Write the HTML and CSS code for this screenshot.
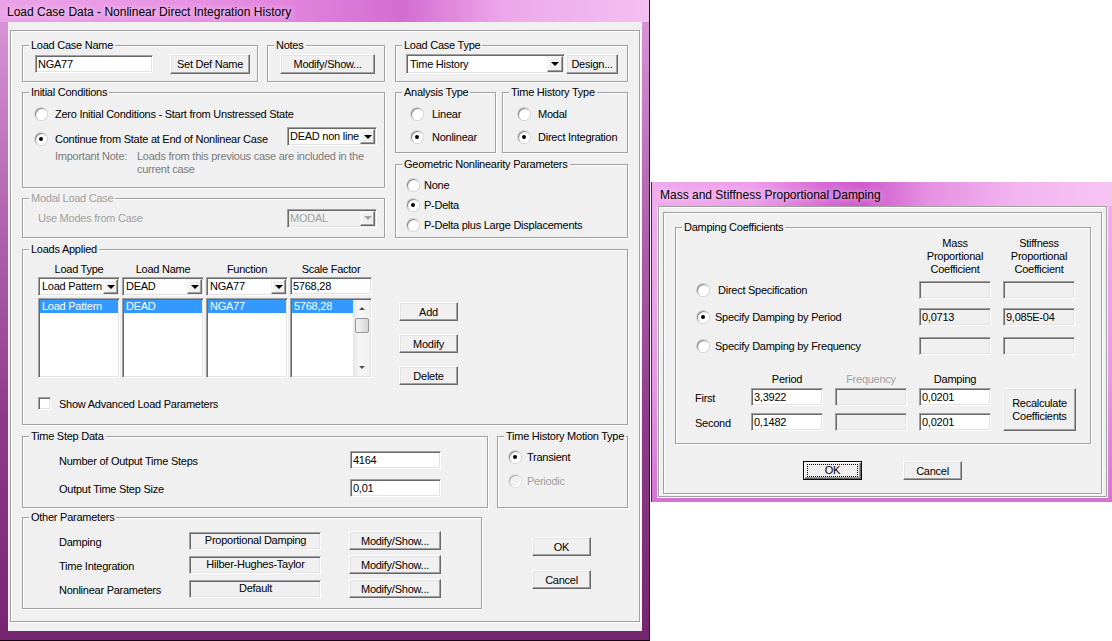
FILE: index.html
```html
<!DOCTYPE html>
<html lang="en">
<head>
    <meta charset="UTF-8">
    <title>Load Case Data - Nonlinear Direct Integration History</title>
    <link rel="stylesheet" href="styles.css">
</head>
<body>
<div class="window win-main">
    <div class="titlebar">Load Case Data - Nonlinear Direct Integration History</div>
    <div class="client">
        <div class="panel">
            <div class="row-a">
                <div class="group g-name">
                    <span class="legend">Load Case Name</span>
                    <div class="edit name-edit">NGA77</div>
                    <div class="btn btn-defname">Set Def Name</div>
                </div>
                <div class="group g-notes">
                    <span class="legend">Notes</span>
                    <div class="btn btn-notes">Modify/Show...</div>
                </div>
                <div class="group g-type">
                    <span class="legend">Load Case Type</span>
                    <div class="combo type-combo"><span class="val">Time History</span><span class="drop"></span></div>
                    <div class="btn btn-design">Design...</div>
                </div>
            </div>

            <div class="row-b">
                <div class="col-left">
                    <div class="group g-initial">
                        <span class="legend">Initial Conditions</span>
                        <div class="opt"><span class="radio"></span><span class="opt-text">Zero Initial Conditions - Start from Unstressed State</span></div>
                        <div class="opt-line">
                            <div class="opt"><span class="radio on"></span><span class="opt-text">Continue from State at End of Nonlinear Case</span></div>
                            <div class="combo case-combo"><span class="val">DEAD non line</span><span class="drop"></span></div>
                        </div>
                        <div class="note">
                            <span class="note-head">Important Note:</span>
                            <span>Loads from this previous case are included in the<br>current case</span>
                        </div>
                    </div>
                    <div class="group g-modal off">
                        <span class="legend">Modal Load Case</span>
                        <span>Use Modes from Case</span>
                        <div class="combo case-combo ro"><span class="val">MODAL</span><span class="drop"></span></div>
                    </div>
                </div>
                <div class="col-right">
                    <div class="type-row">
                        <div class="group g-analysis">
                            <span class="legend">Analysis Type</span>
                            <div class="opt"><span class="radio"></span><span class="opt-text">Linear</span></div>
                            <div class="opt"><span class="radio on"></span><span class="opt-text">Nonlinear</span></div>
                        </div>
                        <div class="group g-thtype">
                            <span class="legend">Time History Type</span>
                            <div class="opt"><span class="radio"></span><span class="opt-text">Modal</span></div>
                            <div class="opt"><span class="radio on"></span><span class="opt-text">Direct Integration</span></div>
                        </div>
                    </div>
                    <div class="group g-geom">
                        <span class="legend">Geometric Nonlinearity Parameters</span>
                        <div class="opt"><span class="radio"></span><span class="opt-text">None</span></div>
                        <div class="opt"><span class="radio on"></span><span class="opt-text">P-Delta</span></div>
                        <div class="opt"><span class="radio"></span><span class="opt-text">P-Delta plus Large Displacements</span></div>
                    </div>
                </div>
            </div>

            <div class="group g-loads">
                <span class="legend">Loads Applied</span>
                <div class="loads-body">
                    <div class="loads-grid">
                        <div class="lhead">Load Type</div>
                        <div class="lhead">Load Name</div>
                        <div class="lhead">Function</div>
                        <div class="lhead">Scale Factor</div>
                        <div class="combo"><span class="val">Load Pattern</span><span class="drop"></span></div>
                        <div class="combo"><span class="val">DEAD</span><span class="drop"></span></div>
                        <div class="combo"><span class="val">NGA77</span><span class="drop"></span></div>
                        <div class="edit">5768,28</div>
                        <div class="list"><div class="sel">Load Pattern</div></div>
                        <div class="list"><div class="sel">DEAD</div></div>
                        <div class="list"><div class="sel">NGA77</div></div>
                        <div class="list list-scroll">
                            <div class="list-items"><div class="sel">5768,28</div></div>
                            <div class="vscroll">
                                <span class="sb-btn sb-up"></span>
                                <span class="sb-thumb"></span>
                                <span class="sb-btn sb-down"></span>
                            </div>
                        </div>
                    </div>
                    <div class="loads-btns">
                        <div class="btn btn-small">Add</div>
                        <div class="btn btn-small">Modify</div>
                        <div class="btn btn-small">Delete</div>
                    </div>
                </div>
                <div class="check-row"><span class="check"></span><span class="opt-text">Show Advanced Load Parameters</span></div>
            </div>

            <div class="row-d">
                <div class="group g-steps">
                    <span class="legend">Time Step Data</span>
                    <div class="field"><span class="field-label">Number of Output Time Steps</span><div class="edit step-edit">4164</div></div>
                    <div class="field"><span class="field-label">Output Time Step Size</span><div class="edit step-edit">0,01</div></div>
                </div>
                <div class="group g-motion">
                    <span class="legend">Time History Motion Type</span>
                    <div class="opt"><span class="radio on"></span><span class="opt-text">Transient</span></div>
                    <div class="opt off"><span class="radio"></span><span class="opt-text">Periodic</span></div>
                </div>
            </div>

            <div class="row-e">
                <div class="group g-other">
                    <span class="legend">Other Parameters</span>
                    <div class="param"><span class="param-label">Damping</span><div class="edit ro center param-box">Proportional Damping</div><div class="btn btn-param">Modify/Show...</div></div>
                    <div class="param"><span class="param-label">Time Integration</span><div class="edit ro center param-box">Hilber-Hughes-Taylor</div><div class="btn btn-param">Modify/Show...</div></div>
                    <div class="param"><span class="param-label">Nonlinear Parameters</span><div class="edit ro center param-box">Default</div><div class="btn btn-param">Modify/Show...</div></div>
                </div>
                <div class="side-btns">
                    <div class="btn btn-small">OK</div>
                    <div class="btn btn-small">Cancel</div>
                </div>
            </div>
        </div>
    </div>
</div>

<div class="window win-damp">
    <div class="titlebar">Mass and Stiffness Proportional Damping</div>
    <div class="dclient">
        <div class="dframe">
            <div class="dinner">
                <div class="group g-damp">
                    <span class="legend">Damping Coefficients</span>
                    <div class="dgrid coef-head">
                        <div class="c4">Mass<br>Proportional<br>Coefficient</div>
                        <div class="c5">Stiffness<br>Proportional<br>Coefficient</div>
                    </div>
                    <div class="dgrid coef-row first-row">
                        <div class="opt wide"><span class="radio"></span><span class="opt-text gap9">Direct Specification</span></div>
                        <div class="edit ro c4"></div>
                        <div class="edit ro c5"></div>
                    </div>
                    <div class="dgrid coef-row mid-row">
                        <div class="opt wide"><span class="radio on"></span><span class="opt-text gap6">Specify Damping by Period</span></div>
                        <div class="edit ro c4">0,0713</div>
                        <div class="edit ro c5">9,085E-04</div>
                    </div>
                    <div class="dgrid coef-row last-row">
                        <div class="opt wide"><span class="radio"></span><span class="opt-text gap6">Specify Damping by Frequency</span></div>
                        <div class="edit ro c4"></div>
                        <div class="edit ro c5"></div>
                    </div>
                    <div class="dgrid period-grid">
                        <div class="ph c2">Period</div>
                        <div class="ph c3 dim">Frequency</div>
                        <div class="ph c4">Damping</div>
                        <div class="plabel r3">First</div>
                        <div class="edit c2 r3">3,3922</div>
                        <div class="edit ro c3 r3"></div>
                        <div class="edit c4 r3">0,0201</div>
                        <div class="btn btn-recalc">Recalculate<br>Coefficients</div>
                        <div class="plabel r5">Second</div>
                        <div class="edit c2 r5">0,1482</div>
                        <div class="edit ro c3 r5"></div>
                        <div class="edit c4 r5">0,0201</div>
                    </div>
                </div>
                <div class="dlg-btns">
                    <div class="btn btn-small btn-default"><span class="focus">OK</span></div>
                    <div class="btn btn-small">Cancel</div>
                </div>
            </div>
        </div>
    </div>
</div>
</body>
</html>
```

FILE: styles.css
```css
* {
    box-sizing: border-box;
}
body {
    margin: 0;
    width: 1112px;
    height: 641px;
    overflow: hidden;
    position: relative;
    background: #fff;
    font-family: "Liberation Sans", Arial, sans-serif;
    font-size: 11px;
    letter-spacing: -0.25px;
    color: #000;
}

/* windows */
.window {
    position: absolute;
}
.titlebar {
    height: 22px;
    line-height: 24px;
    padding-left: 7px;
    font-size: 12px;
    letter-spacing: 0;
    white-space: nowrap;
    text-shadow: 0 0 6px rgba(255, 255, 255, 0.9);
}
.win-main {
    left: 0;
    top: 0;
    width: 650px;
    height: 641px;
    background: linear-gradient(180deg, #dc97da 0%, #b66ab2 30%, #8e3c8a 65%, #762670 100%);
    border-right: 1px solid #3c0c3a;
    border-bottom: 1px solid #120210;
}
.win-main .titlebar {
    background: linear-gradient(90deg, #eaa2e7 0%, #e894e4 25%, #e184dd 45%, #d46cd0 62%, #eda8ea 78%, #f4bff1 100%);
}
.client {
    margin-left: 8px;
    width: 634px;
    height: 609px;
    background: #f0f0f0;
    padding: 8px 2px 0;
}
.panel {
    width: 630px;
    height: 592px;
    border: 1px solid #a0a0a0;
    box-shadow: inset 1px 1px #fff, 1px 1px #fff;
    padding: 14px 11px 0;
}

/* group boxes */
.group {
    position: relative;
    border: 1px solid #a0a0a0;
    box-shadow: inset 1px 1px #fff, 1px 1px #fff;
}
.legend {
    position: absolute;
    top: -7px;
    left: 6px;
    padding: 0 2px;
    background: #f0f0f0;
    line-height: 13px;
    white-space: nowrap;
}
.off,
.off .legend,
.dim {
    color: #a0a0a0;
}

/* controls */
.btn {
    display: flex;
    align-items: center;
    justify-content: center;
    background: #f0f0f0;
    border: 1px solid;
    border-color: #fff #696969 #696969 #fff;
    box-shadow: inset -1px -1px #a0a0a0, inset 1px 1px #e3e3e3;
    text-align: center;
    white-space: nowrap;
    height: 20px;
    flex: none;
}
.btn-small {
    width: 59px;
    height: 19px;
}
.btn-default {
    border-color: #000;
    box-shadow: inset 1px 1px #fff, inset -1px -1px #696969, inset -2px -2px #a0a0a0;
    padding: 2px 3px;
}
.btn-default .focus {
    display: block;
    width: 100%;
    height: 13px;
    line-height: 11px;
    border: 1px dotted #000;
}
.edit {
    background: #fff;
    border: 1px solid;
    border-color: #a0a0a0 #fff #fff #a0a0a0;
    box-shadow: inset 1px 1px #696969, inset -1px -1px #e3e3e3;
    padding: 0 1px 0 2px;
    height: 18px;
    line-height: 16px;
    white-space: nowrap;
    overflow: hidden;
    flex: none;
}
.edit.ro {
    background: #f0f0f0;
}
.edit.center {
    text-align: center;
    line-height: 14px;
}
.combo {
    display: flex;
    background: #fff;
    border: 1px solid;
    border-color: #a0a0a0 #fff #fff #a0a0a0;
    box-shadow: inset 1px 1px #696969, inset -1px -1px #e3e3e3;
    padding: 1px;
    height: 19px;
    flex: none;
}
.combo .val {
    flex: 1;
    min-width: 0;
    padding-left: 2px;
    line-height: 15px;
    white-space: nowrap;
    overflow: hidden;
}
.combo .drop {
    position: relative;
    width: 15px;
    flex: none;
    background: #f0f0f0;
    border: 1px solid;
    border-color: #f0f0f0 #696969 #696969 #f0f0f0;
    box-shadow: inset -1px -1px #a0a0a0, inset 1px 1px #fff;
}
.combo .drop::after {
    content: "";
    position: absolute;
    left: 50%;
    top: 50%;
    margin: -2px 0 0 -4px;
    border-style: solid;
    border-width: 4px 4px 0;
    border-color: #000 transparent transparent;
}
.combo.ro {
    background: #f0f0f0;
    color: #a0a0a0;
}
.combo.ro .drop::after {
    border-top-color: #a0a0a0;
}
.radio {
    position: relative;
    width: 12px;
    height: 12px;
    flex: none;
    border-radius: 50%;
    background: radial-gradient(circle at 60% 60%, #fff 45%, #e2e2e2 100%);
    box-shadow: inset 1px 1px 0 #8c8c8c, inset -1px -1px 0 #fff, 0 0 0 1px #d2d2d2;
}
.radio.on::after {
    content: "";
    position: absolute;
    left: 4px;
    top: 4px;
    width: 4px;
    height: 4px;
    border-radius: 50%;
    background: #000;
}
.off .radio {
    background: #f0f0f0;
    box-shadow: inset 1px 1px 0 #b4b4b4, inset -1px -1px 0 #fff, 0 0 0 1px #dedede;
}
.check {
    width: 13px;
    height: 13px;
    flex: none;
    background: #fff;
    border: 1px solid;
    border-color: #a0a0a0 #fff #fff #a0a0a0;
    box-shadow: inset 1px 1px #696969, inset -1px -1px #e3e3e3;
}
.opt {
    display: flex;
    align-items: center;
    height: 14px;
    line-height: 14px;
    white-space: nowrap;
}

/* row 1 */
.row-a {
    display: flex;
    height: 37px;
}
.g-name {
    width: 236px;
    display: flex;
    align-items: center;
    padding-left: 12px;
}
.name-edit {
    width: 118px;
    margin-right: 17px;
}
.btn-defname {
    width: 80px;
}
.g-notes {
    width: 118px;
    margin-left: 9px;
    display: flex;
    align-items: center;
    padding-left: 12px;
}
.btn-notes {
    width: 95px;
}
.g-type {
    width: 233px;
    margin-left: 10px;
    display: flex;
    align-items: center;
    padding-left: 10px;
}
.type-combo {
    width: 159px;
    height: 20px;
}
.type-combo .drop {
    width: 16px;
}
.type-combo .val {
    line-height: 16px;
}
.btn-design {
    width: 52px;
    margin-left: 1px;
}

/* row 2 */
.row-b {
    display: flex;
    margin-top: 10px;
}
.col-left {
    width: 363px;
}
.g-initial {
    height: 96px;
    padding: 14px 7px 0 12px;
}
.g-initial .opt-text {
    margin-left: 8px;
}
.opt-line {
    display: flex;
    align-items: flex-start;
    height: 19px;
    margin-top: 6px;
}
.opt-line .opt {
    margin-top: 5px;
}
.case-combo {
    width: 90px;
    margin-left: auto;
}
.case-combo .val {
    padding-left: 1px;
}
.note {
    display: flex;
    margin-top: 4px;
    padding-left: 20px;
    line-height: 13px;
    color: #7a7a7a;
}
.note-head {
    width: 82px;
    flex: none;
}
.g-modal {
    height: 40px;
    margin-top: 10px;
    display: flex;
    align-items: center;
    padding: 0 7px 0 15px;
}
.col-right {
    width: 233px;
    margin-left: 10px;
}
.type-row {
    display: flex;
    height: 61px;
}
.g-analysis,
.g-thtype {
    padding: 14px 0 0 15px;
    display: flex;
    flex-direction: column;
    gap: 9px;
}
.g-analysis {
    width: 101px;
}
.g-analysis .opt-text {
    margin-left: 9px;
}
.g-thtype {
    width: 126px;
    margin-left: 6px;
}
.g-thtype .opt-text {
    margin-left: 8px;
}
.g-geom {
    height: 74px;
    margin-top: 11px;
    padding: 13px 0 0 11px;
    display: flex;
    flex-direction: column;
    gap: 6px;
}
.g-geom .opt-text {
    margin-left: 5px;
}

/* loads applied */
.g-loads {
    height: 176px;
    margin-top: 11px;
    padding: 12px 0 0 15px;
}
.loads-body {
    display: flex;
    height: 117px;
}
.loads-grid {
    display: grid;
    grid-template-columns: repeat(4, 82px);
    grid-template-rows: 14px 19px 81px;
    column-gap: 2px;
    row-gap: 1px;
}
.lhead {
    text-align: center;
    line-height: 14px;
    white-space: nowrap;
}
.list {
    margin-top: 1px;
    background: #fff;
    border: 1px solid;
    border-color: #a0a0a0 #fff #fff #a0a0a0;
    box-shadow: inset 1px 1px #696969, inset -1px -1px #e3e3e3;
    padding: 1px;
    white-space: nowrap;
}
.sel {
    height: 13px;
    line-height: 13px;
    padding-left: 2px;
    background: #3399ff;
    color: #fff;
}
.list-scroll {
    display: flex;
}
.list-items {
    flex: 1;
}
.vscroll {
    width: 17px;
    display: flex;
    flex-direction: column;
    background: linear-gradient(90deg, #e6e6e6, #f6f6f6 40%, #f0f0f0);
}
.sb-btn {
    position: relative;
    height: 17px;
    flex: none;
}
.sb-btn::after {
    content: "";
    position: absolute;
    left: 6px;
    border-style: solid;
    border-color: transparent;
}
.sb-up::after {
    top: 7px;
    border-width: 0 3px 3px;
    border-bottom-color: #505050;
}
.sb-down {
    margin-top: auto;
}
.sb-down::after {
    top: 7px;
    border-width: 3px 3px 0;
    border-top-color: #505050;
}
.sb-thumb {
    height: 15px;
    margin: 1px 1px 0 2px;
    border: 1px solid #979797;
    border-radius: 2px;
    background: linear-gradient(90deg, #f4f4f4, #e2e2e2 60%, #d6d6d6);
}
.loads-btns {
    margin-left: 27px;
    padding-top: 40px;
    display: flex;
    flex-direction: column;
    gap: 13px;
}
.check-row {
    display: flex;
    align-items: center;
    height: 13px;
    margin-top: 18px;
    white-space: nowrap;
}
.check-row .opt-text {
    margin-left: 8px;
}

/* time step data */
.row-d {
    display: flex;
    height: 72px;
    margin-top: 11px;
}
.g-steps {
    width: 466px;
    padding: 14px 0 0 36px;
    display: flex;
    flex-direction: column;
    gap: 10px;
}
.field {
    display: flex;
    align-items: center;
    height: 18px;
}
.field-label {
    width: 291px;
    flex: none;
    padding-top: 1px;
}
.step-edit {
    width: 91px;
}
.g-motion {
    width: 131px;
    margin-left: 9px;
    padding: 13px 0 0 11px;
    display: flex;
    flex-direction: column;
    gap: 10px;
}
.g-motion .opt-text {
    margin-left: 6px;
}

/* other parameters */
.row-e {
    display: flex;
    margin-top: 9px;
}
.g-other {
    width: 460px;
    height: 92px;
    padding: 13px 0 0 36px;
    display: flex;
    flex-direction: column;
    gap: 5px;
}
.param {
    display: flex;
    align-items: center;
    height: 19px;
}
.param-label {
    width: 130px;
    flex: none;
    padding-top: 3px;
}
.param-box {
    width: 132px;
}
.btn-param {
    width: 92px;
    height: 19px;
    margin-left: 28px;
}
.side-btns {
    margin-left: 50px;
    padding-top: 20px;
    display: flex;
    flex-direction: column;
    gap: 14px;
}

/* damping dialog */
.win-damp {
    left: 651px;
    top: 182px;
    width: 461px;
    height: 320px;
    background: linear-gradient(180deg, #f2b0f0 0%, #e898e6 60%, #d772d4 100%);
    border-left: 1px solid #5a1a56;
}
.win-damp .titlebar {
    height: 24px;
    line-height: 26px;
    padding-left: 8px;
    background: linear-gradient(90deg, #f1aaee 0%, #ee9eeb 22%, #d768d4 38%, #cf5bcc 46%, #e490e1 60%, #f3b6f0 80%, #f6c4f3 100%);
}
.dclient {
    margin-left: 5px;
    width: 450px;
    height: 292px;
    background: #f0f0f0;
    padding-left: 1px;
}
.dframe {
    width: 449px;
    height: 291px;
    border: 1px solid #a0a0a0;
    box-shadow: inset 1px 1px #fff, 1px 1px #fff;
    padding: 5px 4px 0;
}
.dinner {
    width: 439px;
    height: 282px;
    border: 1px solid #a0a0a0;
    box-shadow: inset 1px 1px #fff, 1px 1px #fff;
    padding: 14px 0 0 11px;
}
.g-damp {
    width: 416px;
    height: 217px;
}
.dgrid {
    display: grid;
    grid-template-columns: 63px repeat(4, 72px);
    column-gap: 12px;
}
.c2 { grid-column: 2; }
.c3 { grid-column: 3; }
.c4 { grid-column: 4; }
.c5 { grid-column: 5; }
.coef-head {
    height: 39px;
    margin-top: 9px;
    line-height: 13px;
    text-align: center;
}
.coef-row {
    height: 18px;
    align-items: center;
}
.first-row { margin-top: 5px; }
.mid-row { margin-top: 9px; }
.last-row { margin-top: 11px; }
.opt.wide {
    grid-column: 1 / 4;
    padding-left: 21px;
}
.gap9 { margin-left: 9px; }
.gap6 { margin-left: 6px; }
.period-grid {
    margin-top: 17px;
    grid-template-rows: 14px 2px 18px 7px 18px;
}
.ph {
    grid-row: 1;
    text-align: center;
    line-height: 14px;
}
.r3 { grid-row: 3; }
.r5 { grid-row: 5; }
.plabel {
    grid-column: 1;
    padding: 3px 0 0 19px;
    line-height: 15px;
}
.btn-recalc {
    grid-column: 5;
    grid-row: 3 / 6;
    width: 73px;
    height: 43px;
    line-height: 13px;
    white-space: normal;
}
.dlg-btns {
    display: flex;
    gap: 41px;
    margin-top: 17px;
    padding-left: 128px;
}
```
